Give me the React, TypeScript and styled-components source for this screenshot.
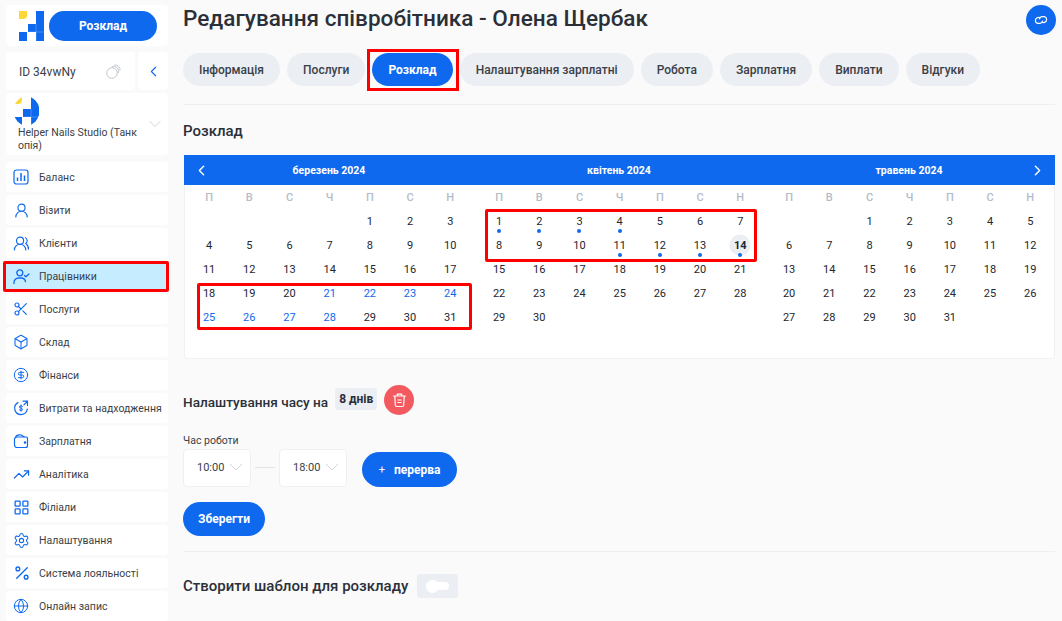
import { ReactNode } from "react";
import styled, { createGlobalStyle } from "styled-components";
import {
  Box,
  ChevronDown,
  ChevronLeft,
  ChevronRight,
  CircleDollarSign,
  Globe,
  LayoutGrid,
  Percent,
  Scissors,
  Settings,
  TrendingUp,
  UserRound,
  UsersRound,
} from "lucide-react";

const BLUE = "#0f69ee";
const INK = "#2b3038";

const GlobalStyle = createGlobalStyle`
  html, body { margin: 0; padding: 0; height: 100%; overflow: hidden; }
  body {
    background: #fafafb;
    color: ${INK};
    font-family: Roboto, "Liberation Sans", sans-serif;
  }
  * { box-sizing: border-box; }
`;

function Logo({ round }: { round?: boolean }) {
  return (
    <svg width="25" height="30" viewBox="0 0 25 30">
      {round && (
        <clipPath id="logo-round">
          <ellipse cx="12.5" cy="15" rx="13" ry="14.5" />
        </clipPath>
      )}
      <g clipPath={round ? "url(#logo-round)" : undefined}>
        <path d="M0 0h8v4a4 4 0 0 1-4 4H0z" fill="#fcd835" />
        <path d="M17 0h8v30h-8v-9H9v-8h8zM0 21h8v9H0z" fill={BLUE} />
        <path d="M9 21h16M17 13v17" stroke="#fff" strokeWidth="0.5" opacity="0.45" />
      </g>
    </svg>
  );
}

function BalanceIcon() {
  return (
    <svg width="16" height="16" viewBox="0 0 16 16" fill="none" stroke={BLUE} strokeWidth="1.2">
      <rect x="1" y="1" width="14" height="14" rx="2.5" />
      <path d="M4.5 8.500v3.500M8 4v8M11.500 6.500v5.500" strokeWidth="1.5" />
    </svg>
  );
}

function EmployeeIcon() {
  return (
    <svg width="17" height="17" viewBox="0 0 17 17" fill="none" stroke={BLUE} strokeWidth="1.3" strokeLinecap="round" strokeLinejoin="round">
      <circle cx="6.8" cy="4.8" r="3" />
      <path d="M1 15.500v-1a4.500 4.500 0 0 1 4.500-4.500h2.600a4.500 4.500 0 0 1 4.400 3.500" />
      <path d="M11.500 7.500l1.400 1.300 3-2.800" />
    </svg>
  );
}

function ExpensesIcon() {
  return (
    <svg width="16" height="16" viewBox="0 0 16 16" fill="none" stroke={BLUE} strokeWidth="1.2" strokeLinecap="round">
      <path d="M5 2.600A6.400 6.400 0 0 0 8 14.600a6.400 6.400 0 0 0 6.300-5.400" />
      <path d="M10 1.200l4.500 0 0 4.300M14.300 1.500l-3.400 3.400" />
      <path d="M9.600 6.400c-.4-.7-3.200-1-3.200.6 0 1.600 3.200.8 3.200 2.400 0 1.500-2.800 1.300-3.300.4M8 4.800v6.400" strokeWidth="1" />
    </svg>
  );
}

function WalletIcon() {
  return (
    <svg width="16" height="16" viewBox="0 0 16 16" fill="none" stroke={BLUE} strokeWidth="1.2" strokeLinejoin="round">
      <path d="M1.500 6.500a2.500 2.500 0 0 1 2.500-2.500h9a1.500 1.500 0 0 1 1.500 1.500v7a2 2 0 0 1-2 2H4a2.500 2.500 0 0 1-2.500-2.500z" />
      <path d="M2.500 4.500C3 2.500 5 1.500 8 2l3.500 2" />
      <circle cx="12" cy="9.500" r="0.7" fill={BLUE} />
    </svg>
  );
}

function CopyIcon() {
  return (
    <svg width="15" height="15" viewBox="0 0 15 15" fill="none" stroke="#c4c9d0" strokeWidth="1">
      <circle cx="6" cy="9" r="5.300" />
      <path d="M6 2.600A5 5 0 0 1 12.400 9M8.400 1A5 5 0 0 1 14 6.400" />
    </svg>
  );
}

function LinkIcon() {
  return (
    <svg width="16" height="16" viewBox="0 0 16 16" fill="none" stroke="#fff" strokeWidth="1.2" strokeLinecap="round">
      <path d="M7.200 5.700A3.400 3.400 0 0 0 4.600 5.600 3 3 0 0 0 4.600 11.400H7a3 3 0 0 0 2.600-2.200" />
      <path d="M8.800 10.300a3.400 3.400 0 0 0 2.600.1 3 3 0 0 0 0-5.800H9a3 3 0 0 0-2.600 2.200" />
    </svg>
  );
}

function TrashIcon() {
  return (
    <svg width="15" height="16" viewBox="0 0 15 16" fill="none" stroke="#fff" strokeWidth="1.2" strokeLinecap="round" strokeLinejoin="round">
      <path d="M1.500 4h12M5.300 4V2.200h4.400V4M2.800 4l.5 9a1.600 1.600 0 0 0 1.600 1.500h5.200A1.600 1.600 0 0 0 11.700 13l.5-9M5.800 8h3.400M5.800 10.500h3.400" />
    </svg>
  );
}

const menu: { label: string; icon: ReactNode; active?: boolean }[] = [
  { label: "Баланс", icon: <BalanceIcon /> },
  { label: "Візити", icon: <UserRound size={17} strokeWidth={1.6} /> },
  { label: "Клієнти", icon: <UsersRound size={17} strokeWidth={1.6} /> },
  { label: "Працівники", icon: <EmployeeIcon />, active: true },
  { label: "Послуги", icon: <Scissors size={16} strokeWidth={1.7} /> },
  { label: "Склад", icon: <Box size={16} strokeWidth={1.6} /> },
  { label: "Фінанси", icon: <CircleDollarSign size={16} strokeWidth={1.5} /> },
  { label: "Витрати та надходження", icon: <ExpensesIcon /> },
  { label: "Зарплатня", icon: <WalletIcon /> },
  { label: "Аналітика", icon: <TrendingUp size={17} strokeWidth={1.7} /> },
  { label: "Філіали", icon: <LayoutGrid size={17} strokeWidth={1.8} /> },
  { label: "Налаштування", icon: <Settings size={17} strokeWidth={1.5} /> },
  { label: "Система лояльності", icon: <Percent size={18} strokeWidth={1.8} /> },
  { label: "Онлайн запис", icon: <Globe size={16} strokeWidth={1.5} /> },
];

const tabs = ["Інформація", "Послуги", "Розклад", "Налаштування зарплатні", "Робота", "Зарплатня", "Виплати", "Відгуки"];
const weekdays = ["П", "В", "С", "Ч", "П", "С", "Н"];

interface Month {
  title: string;
  offset: number;
  days: number;
  blue?: number[];
  dots?: number[];
  today?: number;
}

const months: Month[] = [
  { title: "березень 2024", offset: 4, days: 31, blue: [21, 22, 23, 24, 25, 26, 27, 28] },
  { title: "квітень 2024", offset: 0, days: 30, dots: [1, 2, 3, 4, 11, 12, 13, 14], today: 14 },
  { title: "травень 2024", offset: 2, days: 31 },
];

function CalendarMonth({ month }: { month: Month }) {
  const { offset, days, blue = [], dots = [], today } = month;
  return (
    <MonthGrid>
      {weekdays.map((day, i) => (
        <Weekday key={i}>{day}</Weekday>
      ))}
      {Array.from({ length: offset }).map((_, i) => (
        <span key={`empty-${i}`} />
      ))}
      {Array.from({ length: days }).map((_, i) => {
        const day = i + 1;
        return (
          <Day key={day} $blue={blue.includes(day)} $today={day === today} $dot={dots.includes(day)}>
            {day}
          </Day>
        );
      })}
    </MonthGrid>
  );
}

export default function App() {
  return (
    <Page>
      <GlobalStyle />
      <Sidebar>
        <TopCard>
          <Logo />
          <ScheduleButton>Розклад</ScheduleButton>
        </TopCard>
        <IdRow>
          <IdCard>
            ID 34vwNy
            <CopyIcon />
          </IdCard>
          <CollapseCard>
            <ChevronLeft size={17} color={BLUE} strokeWidth={1.6} />
          </CollapseCard>
        </IdRow>
        <StudioCard>
          <StudioInfo>
            <Logo round />
            <StudioName>Helper Nails Studio (Танк опія)</StudioName>
          </StudioInfo>
          <ChevronDown size={20} color="#c9ced6" strokeWidth={1.1} />
        </StudioCard>
        <Menu>
          {menu.map((item) => (
            <MenuItem key={item.label} $active={item.active}>
              <MenuIcon>{item.icon}</MenuIcon>
              {item.label}
            </MenuItem>
          ))}
        </Menu>
      </Sidebar>

      <Main>
        <Header>
          <Title>Редагування співробітника - Олена Щербак</Title>
          <LinkButton>
            <LinkIcon />
          </LinkButton>
        </Header>
        <Tabs>
          {tabs.map((tab) => (
            <Tab key={tab} $active={tab === "Розклад"}>
              {tab}
            </Tab>
          ))}
        </Tabs>
        <Divider />
        <SectionTitle>Розклад</SectionTitle>

        <Calendar>
          <CalendarHeader>
            <ArrowSlot>
              <ChevronLeft size={17} color="#fff" strokeWidth={2} />
            </ArrowSlot>
            {months.map((m) => (
              <MonthTitle key={m.title}>{m.title}</MonthTitle>
            ))}
            <ArrowSlot $right>
              <ChevronRight size={17} color="#fff" strokeWidth={2} />
            </ArrowSlot>
          </CalendarHeader>
          <Months>
            {months.map((m) => (
              <CalendarMonth key={m.title} month={m} />
            ))}
          </Months>
          <MarchMark />
          <AprilMark />
        </Calendar>

        <TimeHeading>
          <TimeTitle>Налаштування часу на</TimeTitle>
          <DaysBadge>8 днів</DaysBadge>
          <DeleteButton>
            <TrashIcon />
          </DeleteButton>
        </TimeHeading>

        <FieldLabel>Час роботи</FieldLabel>
        <TimeRow>
          <TimeSelect>
            10:00
            <ChevronDown size={24} color="#c9ced6" strokeWidth={0.9} />
          </TimeSelect>
          <Dash />
          <TimeSelect>
            18:00
            <ChevronDown size={24} color="#c9ced6" strokeWidth={0.9} />
          </TimeSelect>
          <BreakButton>
            <BreakPlus>+</BreakPlus>
            перерва
          </BreakButton>
        </TimeRow>
        <SaveButton>Зберегти</SaveButton>
        <BottomDivider />
        <TemplateRow>
          <TemplateTitle>Створити шаблон для розкладу</TemplateTitle>
          <ToggleBox>
            <ToggleTrack />
          </ToggleBox>
        </TemplateRow>
      </Main>
    </Page>
  );
}

const Page = styled.div`
  display: flex;
  width: 1062px;
  height: 621px;
  overflow: hidden;
`;

const Sidebar = styled.aside`
  width: 162px;
  margin-left: 6px;
  padding-top: 5px;
  flex: none;
  display: flex;
  flex-direction: column;
`;

const Card = styled.div`
  background: #fff;
  border-radius: 4px;
`;

const TopCard = styled(Card)`
  height: 42px;
  display: flex;
  align-items: center;
  padding: 1px 11px 0 13px;
  gap: 5px;
`;

const ScheduleButton = styled.div`
  flex: 1;
  height: 30px;
  border-radius: 15px;
  background: ${BLUE};
  color: #fff;
  font-size: 12px;
  font-weight: 700;
  display: flex;
  align-items: center;
  justify-content: center;
`;

const IdRow = styled.div`
  display: flex;
  gap: 3px;
  margin-top: 6px;
`;

const IdCard = styled(Card)`
  width: 129px;
  height: 38px;
  display: flex;
  align-items: center;
  justify-content: space-between;
  padding: 1px 14px 0 13px;
  font-size: 12px;
  color: #3a3f47;
`;

const CollapseCard = styled(Card)`
  flex: 1;
  display: flex;
  align-items: center;
  justify-content: center;
`;

const StudioCard = styled(Card)`
  height: 63px;
  margin-top: 3px;
  display: flex;
  align-items: center;
  justify-content: space-between;
  padding: 0 3px 0 8px;
`;

const StudioInfo = styled.div`
  width: 126px;
  display: flex;
  flex-direction: column;
`;

const StudioName = styled.div`
  font-size: 10.5px;
  line-height: 13px;
  margin: 0 0 0 4px;
  word-break: break-all;
  color: #3a3f47;
`;

const Menu = styled.nav`
  display: flex;
  flex-direction: column;
  gap: 3px;
  margin-top: 7px;
`;

const MenuItem = styled.div<{ $active?: boolean }>`
  position: relative;
  height: 30px;
  display: flex;
  align-items: center;
  padding-left: 7px;
  border-radius: ${(p) => (p.$active ? 0 : "3px")};
  font-size: 10.5px;
  color: #3a3f47;
  background: ${(p) => (p.$active ? "#c6ecff" : "#fff")};
  ${(p) =>
    p.$active &&
    `&::after {
      content: "";
      position: absolute;
      inset: 0 -1px -1px -3px;
      border: 3px solid #f00;
      border-radius: 2px;
    }`}
`;

const MenuIcon = styled.span`
  width: 26px;
  display: flex;
  color: ${BLUE};
`;

const Main = styled.main`
  flex: 1;
  min-width: 0;
  padding: 0 7px 0 15px;
  display: flex;
  flex-direction: column;
`;

const Header = styled.header`
  height: 40px;
  padding-top: 5px;
  display: flex;
  align-items: flex-start;
  justify-content: space-between;
`;

const Title = styled.h1`
  margin: -1px 0 0;
  font-size: 22.55px;
  font-weight: 500;
  line-height: 30px;
`;

const LinkButton = styled.div`
  width: 30px;
  height: 30px;
  margin-right: -1px;
  border-radius: 50%;
  background: ${BLUE};
  display: flex;
  align-items: center;
  justify-content: center;
`;

const Tabs = styled.div`
  display: flex;
  gap: 7.1px;
  margin-top: 13px;
`;

const Tab = styled.div<{ $active?: boolean }>`
  position: relative;
  height: 33px;
  padding: 0 16px;
  border-radius: 17px;
  display: flex;
  align-items: center;
  font-size: 12px;
  font-weight: ${(p) => (p.$active ? 700 : 500)};
  color: ${(p) => (p.$active ? "#fff" : "#3a3f47")};
  background: ${(p) => (p.$active ? BLUE : "#ebeef3")};
  ${(p) =>
    p.$active &&
    `&::after {
      content: "";
      position: absolute;
      inset: -4px -6px -5px -5px;
      border: 3px solid #f00;
    }`}
`;

const Divider = styled.hr`
  width: 100%;
  height: 1px;
  margin: 18px 0 0;
  border: 0;
  background: #eceef2;
`;

const SectionTitle = styled.h2`
  margin: 18px 0 0;
  font-size: 15px;
  line-height: 17px;
  font-weight: 500;
`;

const Calendar = styled.section`
  position: relative;
  margin: 15px 0 0 1px;
  height: 204px;
  background: #fff;
  border: 1px solid #f0f1f4;
  border-radius: 3px;
`;

const CalendarHeader = styled.div`
  position: relative;
  margin: -1px -1px 0;
  height: 30px;
  background: ${BLUE};
  display: grid;
  grid-template-columns: repeat(3, 290px);
`;

const ArrowSlot = styled.span<{ $right?: boolean }>`
  position: absolute;
  top: 7px;
  ${(p) => (p.$right ? "right: 9px;" : "left: 9px;")}
  display: flex;
`;

const MonthTitle = styled.div`
  color: #fff;
  font-size: 10.5px;
  font-weight: 700;
  display: flex;
  align-items: center;
  justify-content: center;
`;

const Months = styled.div`
  display: grid;
  grid-template-columns: repeat(3, 290px);
  margin-left: -1px;
`;

const MonthGrid = styled.div`
  display: grid;
  grid-template-columns: repeat(7, 40.2px);
  grid-auto-rows: 24px;
  padding: 0 0 0 5px;
  font-size: 11px;
`;

const Weekday = styled.span`
  display: flex;
  align-items: center;
  justify-content: center;
  color: #b4bcc8;
  font-weight: 500;
  font-size: 11px;
`;

const Day = styled.span<{ $blue?: boolean; $today?: boolean; $dot?: boolean }>`
  position: relative;
  isolation: isolate;
  display: flex;
  align-items: center;
  justify-content: center;
  color: ${(p) => (p.$blue ? BLUE : "#23272e")};
  font-weight: ${(p) => (p.$today ? 700 : 400)};
  &::before {
    content: "";
    display: ${(p) => (p.$today ? "block" : "none")};
    position: absolute;
    left: 50%;
    top: 50%;
    width: 21px;
    height: 21px;
    transform: translate(-50%, -50%);
    border-radius: 50%;
    background: #ebeef3;
    z-index: -1;
  }
  &::after {
    content: "";
    display: ${(p) => (p.$dot ? "block" : "none")};
    position: absolute;
    left: 50%;
    bottom: 0;
    width: 4px;
    height: 4px;
    margin-left: -2px;
    border-radius: 50%;
    background: ${BLUE};
  }
`;

const Mark = styled.div`
  position: absolute;
  border: 3px solid #f00;
  border-radius: 2px;
  pointer-events: none;
`;

const MarchMark = styled(Mark)`
  left: 12px;
  top: 127px;
  width: 275px;
  height: 47px;
`;

const AprilMark = styled(Mark)`
  left: 300px;
  top: 53px;
  width: 272px;
  height: 53px;
`;

const TimeHeading = styled.div`
  display: flex;
  align-items: center;
  margin-top: 26px;
  height: 30px;
`;

const TimeTitle = styled.span`
  margin-top: 3px;
  font-size: 13.6px;
  font-weight: 500;
`;

const DaysBadge = styled.span`
  margin: -2px 0 0 7px;
  height: 22px;
  padding: 0 4px;
  display: flex;
  align-items: center;
  background: #ebeef3;
  border-radius: 3px;
  font-size: 12px;
  font-weight: 700;
`;

const DeleteButton = styled.span`
  width: 30px;
  height: 30px;
  margin-left: 7px;
  border-radius: 50%;
  background: #f25a5f;
  display: flex;
  align-items: center;
  justify-content: center;
`;

const FieldLabel = styled.label`
  margin-top: 19px;
  font-size: 10.5px;
  line-height: 13px;
  color: #3a3f47;
`;

const TimeRow = styled.div`
  display: flex;
  align-items: flex-start;
  margin-top: 2px;
`;

const TimeSelect = styled.div`
  width: 68px;
  height: 38px;
  padding: 0 0 2px 13px;
  display: flex;
  align-items: center;
  background: #fff;
  border: 1px solid #eef0f3;
  border-radius: 4px;
  font-size: 11px;
  color: #3a3f47;
`;

const Dash = styled.span`
  width: 20px;
  height: 1px;
  margin: 18px 4px 0 4px;
  background: #e3e5e9;
`;

const PrimaryButton = styled.div`
  height: 35px;
  border-radius: 18px;
  background: ${BLUE};
  color: #fff;
  font-size: 12px;
  font-weight: 700;
  display: flex;
  align-items: center;
  justify-content: center;
`;

const BreakButton = styled(PrimaryButton)`
  width: 95px;
  margin: 3px 0 0 15px;
`;

const BreakPlus = styled.span`
  font-size: 11px;
  font-weight: 400;
  margin-right: 9px;
`;

const SaveButton = styled(PrimaryButton)`
  width: 82px;
  height: 34px;
  margin-top: 15px;
`;

const BottomDivider = styled(Divider)`
  margin-top: 15px;
`;

const TemplateRow = styled.div`
  display: flex;
  align-items: center;
  margin-top: 22px;
  gap: 9px;
`;

const TemplateTitle = styled.span`
  font-size: 15px;
  font-weight: 500;
`;

const ToggleBox = styled.span`
  width: 41px;
  height: 24px;
  border-radius: 3px;
  background: #ebeef3;
  display: flex;
  align-items: center;
  padding-left: 9px;
`;

const ToggleTrack = styled.span`
  position: relative;
  width: 23px;
  height: 8px;
  border-radius: 4px;
  background: #fff;
  &::before {
    content: "";
    position: absolute;
    left: 0;
    top: -2.5px;
    width: 13px;
    height: 13px;
    border-radius: 50%;
    background: #fff;
  }
`;
